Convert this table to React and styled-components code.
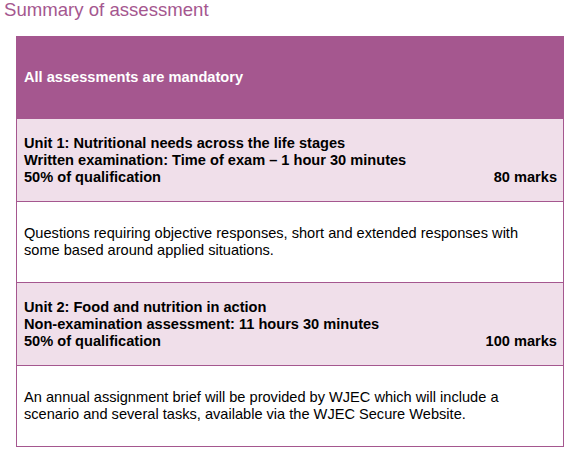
import { createGlobalStyle, styled } from "styled-components"

const GlobalStyle = createGlobalStyle`
  body {
    margin: 0;
    background: #ffffff;
    font-family: "Liberation Sans", Arial, sans-serif;
  }
`

const units = [
    {
        title: "Unit 1: Nutritional needs across the life stages",
        detail: "Written examination: Time of exam \u2013 1 hour 30 minutes",
        share: "50% of qualification",
        marks: "80 marks",
        text: "Questions requiring objective responses, short and extended responses with some based around applied situations.",
    },
    {
        title: "Unit 2: Food and nutrition in action",
        detail: "Non-examination assessment: 11 hours 30 minutes",
        share: "50% of qualification",
        marks: "100 marks",
        text: "An annual assignment brief will be provided by WJEC which will include a scenario and several tasks, available via the WJEC Secure Website.",
    },
]

const App = () => {
    return (
        <Page>
            <GlobalStyle />
            <Title>Summary of assessment</Title>
            <Table>
                <Header>All assessments are mandatory</Header>
                {units.map((unit) => (
                    <div key={unit.title}>
                        <UnitRow>
                            <Line>{unit.title}</Line>
                            <Line>{unit.detail}</Line>
                            <Line $split>
                                <span>{unit.share}</span>
                                <span>{unit.marks}</span>
                            </Line>
                        </UnitRow>
                        <InfoRow>{unit.text}</InfoRow>
                    </div>
                ))}
            </Table>
        </Page>
    )
}

export default App

const Page = styled.div`
    width: 573px;
    height: 451px;
    padding: 0 9px 0 0;
    box-sizing: border-box;
`

const Title = styled.h1`
    margin: 0;
    padding: 0 0 0 4px;
    font-weight: normal;
    font-size: 18.6px;
    line-height: 20px;
    color: #a5578f;
`

const Table = styled.div`
    margin: 16px 0 0 16px;
    border: 1px solid #a5578f;
    border-top: none;
`

const Header = styled.div`
    height: 82px;
    display: flex;
    align-items: center;
    padding: 0 7px;
    background-color: #a5578f;
    color: #ffffff;
    font-weight: bold;
    font-size: 14.6px;
`

const UnitRow = styled.div`
    height: 83px;
    box-sizing: border-box;
    display: flex;
    flex-direction: column;
    justify-content: center;
    padding: 0 6px 0 7px;
    background-color: #f0dfea;
    border-top: 1px solid #a5578f;
    color: #000000;
    font-weight: bold;
    font-size: 14.6px;
    line-height: 17px;
`

const Line = styled.div`
    display: flex;
    justify-content: ${(p) => (p.$split ? "space-between" : "flex-start")};
`

const InfoRow = styled.div`
    height: 81px;
    box-sizing: border-box;
    display: flex;
    align-items: center;
    padding: 0 30px 0 7px;
    border-top: 1px solid #a5578f;
    color: #000000;
    font-size: 14.6px;
    line-height: 17px;
`
